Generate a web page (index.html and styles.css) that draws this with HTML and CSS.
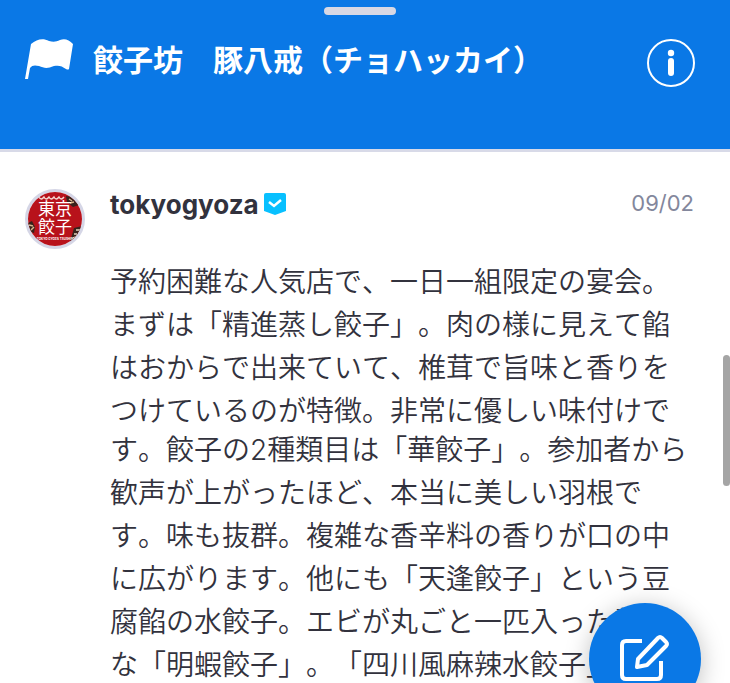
FILE: index.html
```html
<!DOCTYPE html>
<html lang="ja">
<head>
    <meta charset="UTF-8">
    <meta name="viewport" content="width=device-width, initial-scale=1.0">
    <title>餃子坊　豚八戒（チョハッカイ）</title>
    <link rel="stylesheet" href="styles.css">
</head>
<body>
    <header class="header">
        <div class="handle"></div>
        <div class="title-row">
            <svg class="flag" viewBox="0 0 48 42" aria-hidden="true">
                <path d="M6 5C12 0 18-1 24 2C28 3 31 3 35 1C40-1 44 1 48 5L44 30Q43 31 41 30C37 27 34 26 29 27C22 30 19 29 14 27C10 26 7 26 5 29L3 40H0Z" fill="#fff"/>
            </svg>
            <h1>餃子坊　豚八戒（チョハッカイ）</h1>
            <button class="info" aria-label="情報">
                <svg viewBox="0 0 48 48">
                    <circle cx="24" cy="24" r="23" fill="none" stroke="#fff" stroke-width="2"/>
                    <circle cx="24" cy="14" r="3.2" fill="#fff"/>
                    <rect x="21" y="19" width="6" height="18" rx="3" fill="#fff"/>
                </svg>
            </button>
        </div>
    </header>
    <main class="post">
        <div class="avatar">
            <svg class="avatar-art" viewBox="0 0 54 54" aria-hidden="true">
                <rect width="54" height="54" fill="#b8121b"/>
                <path d="M11 5q2 4 5 0q2 4 5 0q2 4 5 0q2 4 5 0q2 4 5 0" fill="none" stroke="#f5d9d3" stroke-width="1.4"/>
                <path d="M38 4l6 1 7 8-6 2-6-5z" fill="#37221c"/>
                <path d="M41 7l3 2M42 11l4-1" stroke="#d9b58d" stroke-width="1.5"/>
                <path d="M0 31l4-2 3 6-1 6-6-2z" fill="#37221c"/>
                <path d="M1 33l4 1M3 38l3-3" stroke="#d9b58d" stroke-width="1.5"/>
                <path d="M46 36l8-2-3 14-9 2z" fill="#37221c"/>
                <path d="M48 38h4M46 42h3M45 46l3-1" stroke="#e3d3bd" stroke-width="1.5"/>
            </svg>
            <div class="avatar-text">
                <span>東京<br>餃子</span>
                <small>TOKYO GYOZA TSUSHIN</small>
            </div>
        </div>
        <article class="content">
            <div class="meta">
                <h2>tokyogyoza</h2>
                <svg class="verified" viewBox="0 0 22 22" aria-hidden="true">
                    <path d="M2 0H20Q22 0 22 2V18L11 22L0 18V2Q0 0 2 0Z" fill="#08c0ff"/>
                    <path d="M5 9L10 13L17 7" fill="none" stroke="#fff" stroke-width="2.5"/>
                </svg>
                <time datetime="09-02">09/02</time>
            </div>
            <p class="text">
                <span>予約困難な人気店で、一日一組限定の宴会。<br>まずは「精進蒸し餃子」。肉の様に見えて餡<br>はおからで出来ていて、椎茸で旨味と香りを<br>つけているのが特徴。非常に優しい味付けで</span>
                <span>す。餃子の2種類目は「華餃子」。参加者から<br>歓声が上がったほど、本当に美しい羽根で<br>す。味も抜群。複雑な香辛料の香りが口の中<br>に広がります。他にも「天逢餃子」という豆<br>腐餡の水餃子。エビが丸ごと一匹入った贅沢<br>な「明蝦餃子」。「四川風麻辣水餃子」</span>
            </p>
        </article>
    </main>
    <div class="scroll-thumb"></div>
    <button class="compose" aria-label="編集">
        <svg viewBox="0 0 50 50" fill="none" stroke="#fff" stroke-width="4">
            <path d="M22 7H6Q2 7 2 11V41Q2 45 6 45H37Q41 45 41 41V27"/>
            <path d="M18 25L38 4Q40 2 42 4L46 8Q48 10 46 12L27 31L17 33Z" stroke-linejoin="round"/>
        </svg>
    </button>
</body>
</html>
```

FILE: styles.css
```css
* {
    box-sizing: border-box;
}
body {
    margin: 0;
    height: 100vh;
    overflow: hidden;
    background-color: white;
    color: #32323d;
    font-family: Inter, "Noto Sans CJK JP", sans-serif;
    text-spacing-trim: space-all;
}
h1, h2, p {
    margin: 0;
}
button {
    border: none;
    padding: 0;
    cursor: pointer;
}
svg {
    display: block;
}
.header {
    height: 152px;
    padding: 7px 10px 0 0;
    background-color: #0a78e6;
    border-bottom: 3px solid #d8dae8;
}
.handle {
    width: 72px;
    height: 8px;
    margin: 0 auto;
    border-radius: 4px;
    background-color: #d8d8e4;
}
.title-row {
    display: flex;
    align-items: flex-start;
    padding: 24px 25px 0 25px;
}
.flag {
    width: 48px;
    height: 42px;
    overflow: visible;
}
.title-row h1 {
    flex: 1;
    margin-left: 20px;
    color: white;
    font-size: 30px;
    font-weight: 700;
    line-height: 42px;
    white-space: nowrap;
}
.info {
    width: 48px;
    height: 48px;
    background: none;
}
.post {
    display: flex;
    gap: 25px;
    padding: 37px 36px 0 25px;
}
.avatar {
    position: relative;
    flex: none;
    width: 60px;
    height: 60px;
    border: 3px solid #d5d6e6;
    border-radius: 50%;
    overflow: hidden;
}
.avatar-text {
    position: absolute;
    inset: 0;
    display: flex;
    flex-direction: column;
    align-items: center;
    padding-top: 8px;
    color: white;
    font-size: 17px;
    line-height: 18px;
    white-space: nowrap;
}
.avatar-text small {
    font-size: 3px;
    font-weight: bold;
    line-height: 6px;
}
.content {
    flex: 1;
    min-width: 0;
}
.meta {
    display: flex;
    align-items: flex-start;
    height: 32px;
}
.meta h2 {
    font-size: 26px;
    font-weight: 700;
    line-height: 32px;
}
.verified {
    width: 22px;
    height: 22px;
    margin: 4px 0 0 5px;
}
.meta time {
    margin-left: auto;
    color: #83879c;
    font-size: 22px;
    line-height: 28px;
}
.text {
    margin-top: 40px;
    font-size: 28px;
    font-weight: 350;
    line-height: 43px;
    font-kerning: none;
    white-space: nowrap;
}
.text span {
    display: block;
}
.text span + span {
    margin-top: -4px;
}
.scroll-thumb {
    position: fixed;
    top: 52%;
    right: 0;
    width: 7px;
    height: 131px;
    border-radius: 4px;
    background-color: #a5a5a5;
}
.compose {
    position: fixed;
    right: 29px;
    bottom: -32px;
    display: flex;
    align-items: center;
    justify-content: center;
    width: 112px;
    height: 112px;
    border-radius: 50%;
    background-color: #0a78e6;
    box-shadow: 0 4px 24px rgba(0, 0, 0, 0.25);
}
.compose svg {
    width: 50px;
    height: 50px;
}
```
